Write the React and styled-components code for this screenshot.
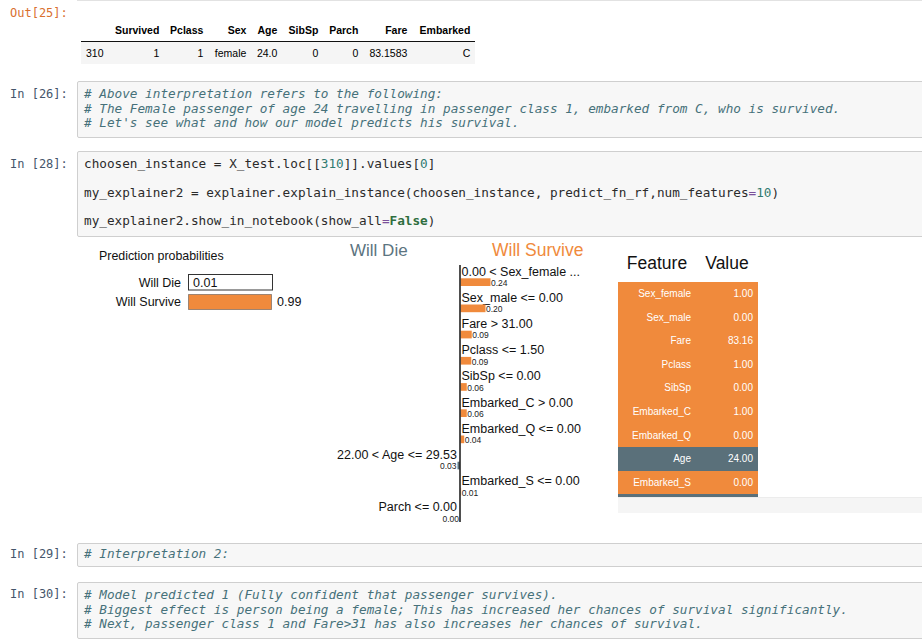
import React from "react";
import styled, { createGlobalStyle } from "styled-components";

const GlobalStyle = createGlobalStyle`
  html, body { margin: 0; padding: 0; background: #fff; overflow: hidden; }
  body { font-family: "Liberation Sans", Arial, sans-serif; }
`;

const ORANGE = "#f08a3c";
const SLATE = "#5a707a";

const Notebook = styled.div`
  width: 940px;
  display: flex;
  flex-direction: column;
`;

const TopEdge = styled.div`
  margin-left: 77px;
  height: 1px;
  background: #e2e2e2;
`;

const Cell = styled.div`
  display: grid;
  grid-template-columns: 77px 1fr;
  margin-top: ${(p) => p.$mt || 0}px;
`;

const Prompt = styled.div`
  font-family: "DejaVu Sans Mono", monospace;
  font-size: 12px;
  line-height: ${(p) => p.$lh || 14.7}px;
  padding-left: 10px;
  padding-top: ${(p) => p.$pt || 0}px;
  color: ${(p) => (p.$out ? "#d9702f" : "#45566b")};
  white-space: pre;
`;

const InputBox = styled.div`
  background: #f7f7f7;
  border: 1px solid #cfcfcf;
  border-radius: 2px;
  padding: ${(p) => p.$pad || "5px 6px 6px"};
`;

const Code = styled.pre`
  margin: 0;
  font-family: "DejaVu Sans Mono", monospace;
  font-size: 12.7px;
  line-height: ${(p) => p.$lh || 14.7}px;
  color: #2b2b2b;
  white-space: pre;
`;

const Comment = styled.span`
  font-style: italic;
  color: #46717a;
`;

const Num = styled.span`
  color: #2f7a70;
`;

const Op = styled.span`
  color: #7b4f9a;
`;

const Kw = styled.span`
  color: #2e6e3e;
  font-weight: bold;
`;

/* ---- Out[25] dataframe ---- */
const OutArea = styled.div`
  padding-top: 12px;
  padding-left: 4px;
`;

const Frame = styled.table`
  border-collapse: collapse;
  table-layout: fixed;
  font-family: "Liberation Sans", Arial, sans-serif;
  font-size: 10.5px;
  color: #000;
`;

const FrameHead = styled.th`
  font-weight: bold;
  text-align: right;
  padding: 0 5px;
  height: 23px;
  border-bottom: 1px solid #111;
`;

const FrameRow = styled.tr`
  background: #f5f5f5;
`;

const FrameCell = styled.td`
  text-align: ${(p) => (p.$left ? "left" : "right")};
  padding: 0 5px;
  height: 22px;
`;

/* ---- LIME output ---- */
const OutputRow = styled.div`
  display: flex;
  align-items: flex-start;
  padding-top: 3px;
`;

const ChartSvg = styled.svg`
  display: block;
  flex: none;
  font-family: "Liberation Sans", Arial, sans-serif;
`;

const FeaturePanel = styled.div`
  width: 304px;
  flex: none;
  display: flex;
  flex-direction: column;
`;

const TableClip = styled.div`
  height: 257px;
  overflow: hidden;
`;

const FeatureTable = styled.table`
  border-collapse: collapse;
  table-layout: fixed;
  width: 140px;
  font-family: "Liberation Sans", Arial, sans-serif;
`;

const FeatureHead = styled.th`
  font-weight: normal;
  font-size: 17.5px;
  line-height: 20px;
  color: #111;
  text-align: center;
  vertical-align: bottom;
  height: 32.7px;
  padding: 0 0 9px;
  white-space: nowrap;
`;

const FeatureRow = styled.tr`
  background: ${(p) => (p.$neg ? SLATE : ORANGE)};
  height: 23.6px;
`;

const FeatureCell = styled.td`
  font-size: 10px;
  color: #fff;
  text-align: right;
  padding: 0 5px 0 0;
  white-space: nowrap;
`;

const ScrollBand = styled.div`
  height: 15px;
  background: #f5f5f5;
  border-top: 1px solid #ececec;
`;

const probFeatures = [
  { label: "0.00 < Sex_female ...", v: 0.24, neg: false },
  { label: "Sex_male <= 0.00", v: 0.2, neg: false },
  { label: "Fare > 31.00", v: 0.09, neg: false },
  { label: "Pclass <= 1.50", v: 0.086, neg: false, txt: "0.09" },
  { label: "SibSp <= 0.00", v: 0.05, neg: false, txt: "0.06" },
  { label: "Embarked_C > 0.00", v: 0.05, neg: false, txt: "0.06" },
  { label: "Embarked_Q <= 0.00", v: 0.03, neg: false, txt: "0.04" },
  { label: "22.00 < Age <= 29.53", v: 0.02, neg: true, txt: "0.03" },
  { label: "Embarked_S <= 0.00", v: 0.005, neg: false, txt: "0.01" },
  { label: "Parch <= 0.00", v: 0, neg: true, txt: "0.00" },
];

/* last entry is the row that the scroll box cuts off: only its top edge shows */
const tableRows = [
  ["Sex_female", "1.00", false],
  ["Sex_male", "0.00", false],
  ["Fare", "83.16", false],
  ["Pclass", "1.00", false],
  ["SibSp", "0.00", false],
  ["Embarked_C", "1.00", false],
  ["Embarked_Q", "0.00", false],
  ["Age", "24.00", true],
  ["Embarked_S", "0.00", false],
  ["", "", true],
];

function ProbaChart() {
  return (
    <ChartSvg width="243" height="80" viewBox="0 0 243 80">
      <text x="22" y="20" fontSize="12.4" fill="#111">Prediction probabilities</text>
      <text x="104" y="46.5" fontSize="12.5" fill="#111" textAnchor="end">Will Die</text>
      <rect x="111.5" y="34.5" width="84" height="15.5" fill="#fff" stroke="#333" strokeWidth="1" />
      <text x="116" y="46.5" fontSize="12.5" fill="#111">0.01</text>
      <text x="104" y="66" fontSize="12.5" fill="#111" textAnchor="end">Will Survive</text>
      <rect x="111.5" y="54.5" width="83" height="15" fill={ORANGE} stroke="#444" strokeWidth="1" strokeDasharray="1 1" />
      <text x="200" y="66" fontSize="12.5" fill="#111">0.99</text>
    </ChartSvg>
  );
}

function ExplainChart() {
  const axis = 140;
  const scale = 125;
  return (
    <ChartSvg width="298" height="285" viewBox="0 0 298 285">
      <text x="30" y="16" fontSize="17" fill="#5b7480">Will Die</text>
      <text x="172" y="16" fontSize="17.5" fill={ORANGE}>Will Survive</text>
      {probFeatures.map((f, i) => {
        const ly = 35.6 + 26.2 * i;
        const by = 38.3 + 26.2 * i;
        const vy = 46 + 26.2 * i;
        const w = f.v * scale;
        const txt = f.txt || f.v.toFixed(2);
        if (f.neg) {
          return (
            <g key={f.label}>
              <text x={axis - 3} y={ly} fontSize="12.5" fill="#111" textAnchor="end">{f.label}</text>
              {w > 0 && <rect x={axis - w} y={by} width={w} height="7.7" fill={SLATE} />}
              <text x={axis - w - 1} y={vy} fontSize="8.5" fill="#222" textAnchor="end">{txt}</text>
            </g>
          );
        }
        return (
          <g key={f.label}>
            <text x={axis + 1.5} y={ly} fontSize="12.5" fill="#111">{f.label}</text>
            <rect x={axis + 0.5} y={by} width={w} height="7.7" fill={ORANGE} />
            <text x={axis + 1 + w} y={vy} fontSize="8.5" fill="#222">{txt}</text>
          </g>
        );
      })}
      <line x1={axis} y1="25" x2={axis} y2="282" stroke="#222" strokeWidth="1.6" />
    </ChartSvg>
  );
}

function FeatureValues() {
  return (
    <FeaturePanel>
      <TableClip>
        <FeatureTable>
          <colgroup>
            <col style={{ width: 78 }} />
            <col style={{ width: 62 }} />
          </colgroup>
          <thead>
            <tr>
              <FeatureHead>Feature</FeatureHead>
              <FeatureHead>Value</FeatureHead>
            </tr>
          </thead>
          <tbody>
            {tableRows.map(([name, val, neg], i) => (
              <FeatureRow key={i} $neg={neg}>
                <FeatureCell>{name}</FeatureCell>
                <FeatureCell>{val}</FeatureCell>
              </FeatureRow>
            ))}
          </tbody>
        </FeatureTable>
      </TableClip>
      <ScrollBand />
    </FeaturePanel>
  );
}

const frameCols = [29, 53, 44, 43, 31, 41, 40, 49, 63];
const frameHeads = ["", "Survived", "Pclass", "Sex", "Age", "SibSp", "Parch", "Fare", "Embarked"];
const frameData = ["310", "1", "1", "female", "24.0", "0", "0", "83.1583", "C"];

export default function App() {
  return (
    <>
      <GlobalStyle />
      <Notebook>
        <TopEdge />
        <Cell $mt={5}>
          <Prompt $out>Out[25]:</Prompt>
          <OutArea>
            <Frame>
              <colgroup>
                {frameCols.map((w, i) => (
                  <col key={i} style={{ width: w }} />
                ))}
              </colgroup>
              <thead>
                <tr>
                  {frameHeads.map((h, i) => (
                    <FrameHead key={i}>{h}</FrameHead>
                  ))}
                </tr>
              </thead>
              <tbody>
                <FrameRow>
                  {frameData.map((d, i) => (
                    <FrameCell key={i} $left={i === 0}>{d}</FrameCell>
                  ))}
                </FrameRow>
              </tbody>
            </Frame>
          </OutArea>
        </Cell>

        <Cell $mt={17}>
          <Prompt $pt={6}>In [26]:</Prompt>
          <InputBox>
            <Code>
              <Comment># Above interpretation refers to the following:</Comment>{"\n"}
              <Comment># The Female passenger of age 24 travelling in passenger class 1, embarked from C, who is survived.</Comment>{"\n"}
              <Comment># Let's see what and how our model predicts his survival.</Comment>
            </Code>
          </InputBox>
        </Cell>

        <Cell $mt={13}>
          <Prompt $pt={6} $lh={14.3}>In [28]:</Prompt>
          <InputBox $pad="5px 6px 7.5px">
            <Code $lh={14.3}>
              {"choosen_instance = X_test.loc[["}<Num>310</Num>{"]].values["}<Num>0</Num>{"]\n\n"}
              {"my_explainer2 = explainer.explain_instance(choosen_instance, predict_fn_rf,num_features"}<Op>=</Op><Num>10</Num>{")\n\n"}
              {"my_explainer2.show_in_notebook(show_all"}<Op>=</Op><Kw>False</Kw>{")"}
            </Code>
          </InputBox>
        </Cell>

        <Cell>
          <div />
          <OutputRow>
            <ProbaChart />
            <ExplainChart />
            <FeatureValues />
          </OutputRow>
        </Cell>

        <Cell $mt={18}>
          <Prompt $pt={4}>In [29]:</Prompt>
          <InputBox $pad="3px 6px 4px">
            <Code>
              <Comment># Interpretation 2:</Comment>
            </Code>
          </InputBox>
        </Cell>

        <Cell $mt={15}>
          <Prompt $pt={5}>In [30]:</Prompt>
          <InputBox>
            <Code>
              <Comment># Model predicted 1 (Fully confident that passenger survives).</Comment>{"\n"}
              <Comment># Biggest effect is person being a female; This has increased her chances of survival significantly.</Comment>{"\n"}
              <Comment># Next, passenger class 1 and Fare&gt;31 has also increases her chances of survival.</Comment>
            </Code>
          </InputBox>
        </Cell>
      </Notebook>
    </>
  );
}
